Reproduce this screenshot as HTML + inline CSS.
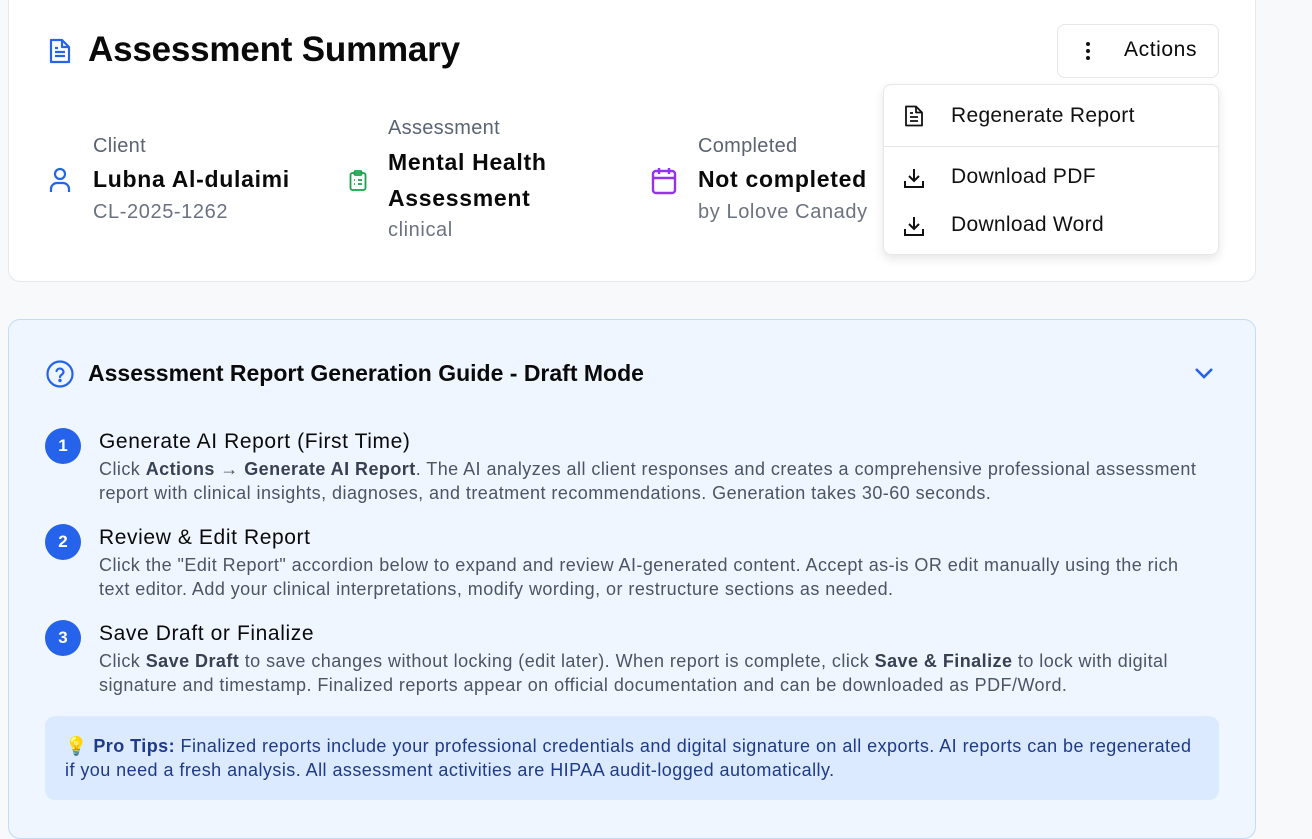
<!DOCTYPE html>
<html><head><meta charset="utf-8"><style>
*{box-sizing:border-box;margin:0;padding:0}
body{width:1312px;height:814px;background:#f8f9fb;font-family:"Liberation Sans",sans-serif;position:relative;overflow:hidden;color:#0a0a0a}
.abs{position:absolute;white-space:nowrap}
.card1{left:8px;top:-20px;width:1248px;height:302px;background:#fff;border:1px solid #e5e7eb;border-radius:12px}
.card2{left:8px;top:319px;width:1248px;height:520px;background:#eff6ff;border:1px solid #bfdbfe;border-radius:12px}
.lbl{font-size:20px;color:#5b6472;letter-spacing:.3px}
.val{font-size:23px;font-weight:bold;color:#0a0a0a;letter-spacing:.7px}
.sub{font-size:20px;color:#6b7280;letter-spacing:.6px}
.step{left:45px;width:36px;height:36px;border-radius:50%;background:#2563eb;color:#fff;font-weight:bold;font-size:17px;text-align:center;line-height:36px}
.st{left:99px;font-size:21px;color:#0a0a0a;letter-spacing:.6px}
.sd{left:99px;font-size:18px;line-height:24px;color:#4b5563;letter-spacing:.45px}
.sd b{color:#374151}
.menu{left:883px;top:84px;width:336px;height:171px;background:#fff;border:1px solid #e5e7eb;border-radius:8px;box-shadow:0 4px 10px rgba(0,0,0,.1)}
.mi{left:67px;font-size:21px;color:#111;letter-spacing:.3px}
</style></head><body>
<div class="abs card1"></div>
<svg class="abs" style="left:48px;top:37px" width="24" height="28" viewBox="0 0 24 28" fill="none" stroke="#2563eb" stroke-width="2.2" stroke-linejoin="round"><path d="M3 3h11l7 7v15H3z"/><path d="M14 3v7h7"/><path d="M7 15h10M7 19h10M7 11h3"/></svg>
<div class="abs" style="left:88px;top:30px;font-size:35px;font-weight:bold;letter-spacing:-0.2px">Assessment Summary</div>

<svg class="abs" style="left:49px;top:167px" width="22" height="26" viewBox="0 0 22 26" fill="none" stroke="#2563eb" stroke-width="2.2"><circle cx="11" cy="7" r="5"/><path d="M2 25v-3a6 6 0 0 1 6-6h6a6 6 0 0 1 6 6v3"/></svg>
<div class="abs lbl" style="left:93px;top:135px">Client</div>
<div class="abs val" style="left:93px;top:166px">Lubna Al-dulaimi</div>
<div class="abs sub" style="left:93px;top:201px">CL-2025-1262</div>

<svg class="abs" style="left:349px;top:170px" width="18" height="21" viewBox="0 0 18 21" fill="none" stroke="#16a34a" stroke-width="1.8"><rect x="1.5" y="3" width="15" height="17" rx="2"/><rect x="5.5" y="1" width="7" height="4" rx="1"/><path d="M5 10h1M9 10h4M5 14h1M9 14h4"/></svg>
<div class="abs lbl" style="left:388px;top:117px">Assessment</div>
<div class="abs val" style="left:388px;top:144px;line-height:36px">Mental Health<br>Assessment</div>
<div class="abs sub" style="left:388px;top:219px">clinical</div>

<svg class="abs" style="left:650px;top:166px" width="28" height="30" viewBox="0 0 28 30" fill="none" stroke="#9333ea" stroke-width="2.4"><rect x="3" y="5" width="22" height="22" rx="3"/><path d="M3 12h22M9 2v6M19 2v6"/></svg>
<div class="abs lbl" style="left:698px;top:135px">Completed</div>
<div class="abs val" style="left:698px;top:166px">Not completed</div>
<div class="abs sub" style="left:698px;top:201px">by Lolove Canady</div>

<div class="abs" style="left:1057px;top:24px;width:162px;height:54px;background:#fff;border:1px solid #e5e7eb;border-radius:8px"></div>
<div class="abs" style="left:1086px;top:42px;width:4px;height:4px;border-radius:2px;background:#111;box-shadow:0 7px 0 #111,0 14px 0 #111"></div>
<div class="abs" style="left:1124px;top:38px;font-size:21px;letter-spacing:.6px">Actions</div>

<div class="abs menu">
<svg class="abs" style="left:20px;top:20px" width="20" height="22" viewBox="0 0 20 22" fill="none" stroke="#111" stroke-width="1.8" stroke-linejoin="round"><path d="M2 1.5h10l6 6v13H2z"/><path d="M12 1.5v6h6"/><path d="M6 12h8M6 16h8M6 8h3"/></svg>
<div class="abs mi" style="top:19px">Regenerate Report</div>
<div class="abs" style="left:0;top:61px;width:334px;height:1px;background:#e5e7eb"></div>
<svg class="abs" style="left:19px;top:82px" width="22" height="22" viewBox="0 0 22 22" fill="none" stroke="#111" stroke-width="2"><path d="M11 2v12M6 9l5 5 5-5M2 14v6h18v-6"/></svg>
<div class="abs mi" style="top:80px">Download PDF</div>
<svg class="abs" style="left:19px;top:130px" width="22" height="22" viewBox="0 0 22 22" fill="none" stroke="#111" stroke-width="2"><path d="M11 2v12M6 9l5 5 5-5M2 14v6h18v-6"/></svg>
<div class="abs mi" style="top:128px">Download Word</div>
</div>

<div class="abs card2"></div>
<svg class="abs" style="left:46px;top:360px" width="28" height="28" viewBox="0 0 28 28" fill="none" stroke="#2563eb" stroke-width="2.2" stroke-linecap="round"><circle cx="14" cy="14" r="12.5"/><path d="M10.5 11a3.6 3.6 0 0 1 7 1c0 2.4-3.5 3-3.5 5"/><circle cx="14" cy="20.5" r=".6" fill="#2563eb"/></svg>
<div class="abs" style="left:88px;top:360px;font-size:23px;font-weight:bold">Assessment Report Generation Guide - Draft Mode</div>
<svg class="abs" style="left:1194px;top:366px" width="20" height="14" viewBox="0 0 20 14" fill="none" stroke="#2563eb" stroke-width="2.6"><path d="M2 3l8 8 8-8"/></svg>

<div class="abs step" style="top:428px">1</div>
<div class="abs st" style="top:430px">Generate AI Report (First Time)</div>
<div class="abs sd" style="top:457px">Click <b>Actions</b> → <b>Generate AI Report</b>. The AI analyzes all client responses and creates a comprehensive professional assessment<br>report with clinical insights, diagnoses, and treatment recommendations. Generation takes 30-60 seconds.</div>

<div class="abs step" style="top:524px">2</div>
<div class="abs st" style="top:526px">Review &amp; Edit Report</div>
<div class="abs sd" style="top:553px">Click the "Edit Report" accordion below to expand and review AI-generated content. Accept as-is OR edit manually using the rich<br>text editor. Add your clinical interpretations, modify wording, or restructure sections as needed.</div>

<div class="abs step" style="top:620px">3</div>
<div class="abs st" style="top:622px">Save Draft or Finalize</div>
<div class="abs sd" style="top:649px">Click <b>Save Draft</b> to save changes without locking (edit later). When report is complete, click <b>Save &amp; Finalize</b> to lock with digital<br>signature and timestamp. Finalized reports appear on official documentation and can be downloaded as PDF/Word.</div>

<div class="abs" style="left:45px;top:716px;width:1174px;height:84px;background:#dbeafe;border-radius:10px;padding:18px 20px 0 20px;font-size:18px;line-height:24px;color:#1e3a8a;letter-spacing:.45px">💡 <b>Pro Tips:</b> Finalized reports include your professional credentials and digital signature on all exports. AI reports can be regenerated<br>if you need a fresh analysis. All assessment activities are HIPAA audit-logged automatically.</div>
</body></html>
